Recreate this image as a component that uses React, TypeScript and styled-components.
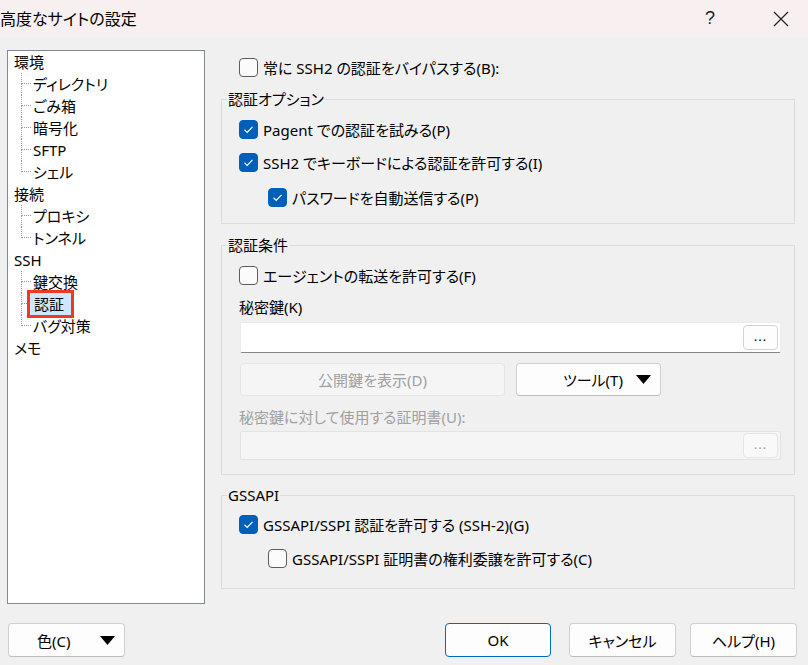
import * as React from 'react';
import styled, { createGlobalStyle } from 'styled-components';

const GlobalStyle = createGlobalStyle`
    html, body {
        margin: 0;
        padding: 0;
        background: #f0f0f0;
    }
    body {
        font-family: 'Noto Sans', 'Noto Sans CJK JP', sans-serif;
        font-size: 15px;
        color: #000;
        font-feature-settings: 'palt';
    }
    * {
        box-sizing: border-box;
    }
`;

const Dialog = styled.div`
    width: 808px;
    height: 665px;
    display: flex;
    flex-direction: column;
    background: #f0f0f0;
    overflow: hidden;
`;

const TitleBar = styled.div`
    height: 37px;
    background: #f8eff0;
    display: flex;
    align-items: center;
`;

const Title = styled.div`
    flex: 1;
    font-size: 16px;
    line-height: 20px;
`;

const TitleButton = styled.div<{ gap?: number }>`
    width: 46px;
    height: 37px;
    display: flex;
    align-items: center;
    justify-content: center;
    margin-right: ${({ gap }) => gap ?? 0}px;
    font-size: 18px;
    font-family: 'Liberation Sans', sans-serif;
    color: #222;
`;

const Content = styled.div`
    display: flex;
    gap: 16px;
    padding: 13px 13px 0 7px;
`;

const Tree = styled.div`
    width: 198px;
    height: 554px;
    border: 1px solid #828790;
    background: #fff;
    padding-left: 6px;
`;

const TreeRow = styled.div`
    display: flex;
    align-items: center;
    height: 22px;
    line-height: 22px;
    white-space: nowrap;
`;

const Connector = styled.div<{ last: boolean }>`
    width: 10px;
    height: 22px;
    margin-left: 7px;
    margin-right: 2px;
    display: grid;
    grid-template-rows: 11px 11px;
    & > span:first-child {
        border-left: 1px dotted #9a9a9a;
        border-bottom: 1px dotted #9a9a9a;
    }
    & > span:last-child {
        border-left: ${({ last }) => (last ? 'none' : '1px dotted #9a9a9a')};
    }
`;

const NodeLabel = styled.span<{ selected?: boolean }>`
    ${({ selected }) =>
        selected &&
        `
        background: #cce8ff;
        border: 3px solid #ee3a22;
        padding: 0 7px 0 4px;
        margin: -3px 0 -3px -6px;
        line-height: 22px;
    `}
`;

const RightPanel = styled.div`
    width: 574px;
    padding-top: 6px;
    display: flex;
    flex-direction: column;
`;

const CheckRow = styled.label<{ indent?: number; top?: number }>`
    display: flex;
    align-items: center;
    gap: 5px;
    height: 22px;
    margin-left: ${({ indent }) => indent ?? 0}px;
    margin-top: ${({ top }) => top ?? 0}px;
    white-space: nowrap;
`;

const Box = styled.span<{ checked: boolean }>`
    width: 19px;
    height: 19px;
    border-radius: 4px;
    flex: none;
    display: flex;
    align-items: center;
    justify-content: center;
    background: ${({ checked }) => (checked ? '#005fb8' : '#fbfbfb')};
    border: 1px solid ${({ checked }) => (checked ? '#005fb8' : '#5d5d5d')};
`;

const Group = styled.fieldset<{ top: number; pb: number }>`
    margin: ${({ top }) => top}px 0 0 0;
    padding: 0 13px ${({ pb }) => pb}px 17px;
    border: 1px solid #dcdcdc;
    min-width: 0;
`;

const Legend = styled.legend`
    margin-left: -12px;
    padding: 0 1px;
    line-height: 20px;
    height: 20px;
`;

const FieldLabel = styled.div<{ top: number; disabled?: boolean }>`
    height: 22px;
    line-height: 22px;
    margin-top: ${({ top }) => top}px;
    color: ${({ disabled }) => (disabled ? '#a0a0a0' : '#000')};
    white-space: nowrap;
`;

const TextBox = styled.div<{ disabled?: boolean; h: number; top: number }>`
    height: ${({ h }) => h}px;
    margin-top: ${({ top }) => top}px;
    margin-left: 1px;
    background: ${({ disabled }) => (disabled ? '#f5f5f5' : '#fff')};
    border: 1px solid ${({ disabled }) => (disabled ? '#e3e3e3' : '#ececec')};
    border-bottom-color: ${({ disabled }) => (disabled ? '#e3e3e3' : '#868686')};
    border-radius: 2px;
    display: flex;
    align-items: center;
    justify-content: flex-end;
    padding-right: 2px;
`;

const BrowseButton = styled.div<{ disabled?: boolean }>`
    width: 35px;
    height: 25px;
    border: 1px solid ${({ disabled }) => (disabled ? '#e5e5e5' : '#d3d3d3')};
    border-radius: 4px;
    background: ${({ disabled }) => (disabled ? '#f9f9f9' : '#fdfdfd')};
    color: ${({ disabled }) => (disabled ? '#a0a0a0' : '#000')};
    font-size: 13px;
    line-height: 1;
    display: flex;
    align-items: flex-end;
    justify-content: center;
    padding-bottom: 6px;
    letter-spacing: 1px;
`;

const ButtonRow = styled.div`
    display: flex;
    gap: 11px;
    margin-top: 10px;
    margin-left: 1px;
`;

const Button = styled.div<{ w: number; h?: number; disabled?: boolean; primary?: boolean; mr?: number }>`
    width: ${({ w }) => w}px;
    height: ${({ h }) => h ?? 34}px;
    margin-right: ${({ mr }) => mr ?? 0}px;
    border-radius: 4px;
    border: 1px solid ${({ disabled, primary }) => (primary ? '#0067c0' : disabled ? '#e5e5e5' : '#d0d0d0')};
    border-bottom-color: ${({ disabled, primary }) => (primary ? '#0067c0' : disabled ? '#e5e5e5' : '#bcbcbc')};
    background: ${({ disabled }) => (disabled ? '#f5f5f5' : '#fdfdfd')};
    color: ${({ disabled }) => (disabled ? '#a0a0a0' : '#000')};
    display: flex;
    align-items: center;
    justify-content: center;
    white-space: nowrap;
`;

const DropButton = styled(Button)<{ pl: number }>`
    justify-content: space-between;
    padding: 0 9px 0 ${({ pl }) => pl}px;
`;

const Footer = styled.div`
    display: flex;
    align-items: center;
    padding: 19px 11px 0 8px;
`;

const FooterSpacer = styled.div`
    flex: 1;
`;

const FooterButtons = styled.div`
    display: flex;
`;

const CheckMark = () => (
    <svg width="13" height="13" viewBox="0 0 13 13">
        <polyline points="2.5,6.8 5.2,9.4 10.5,3.8" fill="none" stroke="#fff" strokeWidth="1.2" />
    </svg>
);

const Caret = () => (
    <svg width="15" height="9" viewBox="0 0 15 9">
        <polygon points="0,0 15,0 7.5,9" fill="#000" />
    </svg>
);

const CloseIcon = () => (
    <svg width="16" height="16" viewBox="0 0 16 16">
        <path d="M1 1 L15 15 M15 1 L1 15" stroke="#222" strokeWidth="1.2" />
    </svg>
);

type CheckProps = { checked: boolean; label: string; indent?: number; top?: number };

const Check = ({ checked, label, indent, top }: CheckProps) => (
    <CheckRow indent={indent} top={top}>
        <Box checked={checked}>{checked && <CheckMark />}</Box>
        <span>{label}</span>
    </CheckRow>
);

const treeData = [
    { label: '環境', children: ['ディレクトリ', 'ごみ箱', '暗号化', 'SFTP', 'シェル'] },
    { label: '接続', children: ['プロキシ', 'トンネル'] },
    { label: 'SSH', children: ['鍵交換', '認証', 'バグ対策'] },
    { label: 'メモ', children: [] as string[] },
];

const selectedNode = '認証';

const App = (): JSX.Element => {
    return (
        <Dialog>
            <GlobalStyle />
            <TitleBar>
                <Title>高度なサイトの設定</Title>
                <TitleButton gap={25}>?</TitleButton>
                <TitleButton gap={4}>
                    <CloseIcon />
                </TitleButton>
            </TitleBar>

            <Content>
                <Tree>
                    {treeData.map((node) => (
                        <React.Fragment key={node.label}>
                            <TreeRow>
                                <NodeLabel>{node.label}</NodeLabel>
                            </TreeRow>
                            {node.children.map((child, i) => (
                                <TreeRow key={child}>
                                    <Connector last={i === node.children.length - 1}>
                                        <span />
                                        <span />
                                    </Connector>
                                    <NodeLabel selected={child === selectedNode}>{child}</NodeLabel>
                                </TreeRow>
                            ))}
                        </React.Fragment>
                    ))}
                </Tree>

                <RightPanel>
                    <Check checked={false} label="常に SSH2 の認証をバイパスする(B):" indent={18} />

                    <Group top={11} pb={15}>
                        <Legend>認証オプション</Legend>
                        <Check checked label="Pagent での認証を試みる(P)" top={9} />
                        <Check checked label="SSH2 でキーボードによる認証を許可する(I)" top={11} />
                        <Check checked label="パスワードを自動送信する(P)" indent={29} top={13} />
                    </Group>

                    <Group top={11} pb={14}>
                        <Legend>認証条件</Legend>
                        <Check checked={false} label="エージェントの転送を許可する(F)" top={9} />
                        <FieldLabel top={10}>秘密鍵(K)</FieldLabel>
                        <TextBox h={31} top={4}>
                            <BrowseButton>...</BrowseButton>
                        </TextBox>
                        <ButtonRow>
                            <Button w={265} h={33} disabled>
                                公開鍵を表示(D)
                            </Button>
                            <DropButton w={145} h={33} pl={46}>
                                <span>ツール(T)</span>
                                <Caret />
                            </DropButton>
                        </ButtonRow>
                        <FieldLabel top={10} disabled>
                            秘密鍵に対して使用する証明書(U):
                        </FieldLabel>
                        <TextBox h={29} top={3} disabled>
                            <BrowseButton disabled>...</BrowseButton>
                        </TextBox>
                    </Group>

                    <Group top={10} pb={19}>
                        <Legend>GSSAPI</Legend>
                        <Check checked label="GSSAPI/SSPI 認証を許可する (SSH-2)(G)" top={8} />
                        <Check checked={false} label="GSSAPI/SSPI 証明書の権利委譲を許可する(C)" indent={29} top={12} />
                    </Group>
                </RightPanel>
            </Content>

            <Footer>
                <DropButton w={117} pl={28}>
                    <span>色(C)</span>
                    <Caret />
                </DropButton>
                <FooterSpacer />
                <FooterButtons>
                    <Button w={106} primary mr={18}>
                        OK
                    </Button>
                    <Button w={107} mr={14}>
                        キャンセル
                    </Button>
                    <Button w={107}>ヘルプ(H)</Button>
                </FooterButtons>
            </Footer>
        </Dialog>
    );
};

export default App;
